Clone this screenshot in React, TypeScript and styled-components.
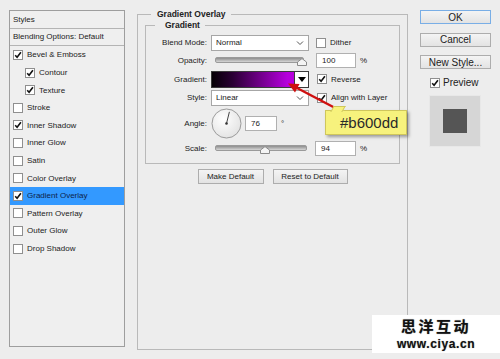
import React from "react";
import styled, { createGlobalStyle } from "styled-components";

const GlobalStyle = createGlobalStyle`
  html, body {
    margin: 0;
    padding: 0;
    background: #ededed;
  }
`;

const Page = styled.div`
  position: relative;
  width: 500px;
  height: 359px;
  box-sizing: border-box;
  padding: 10px 0 0 9px;
  display: flex;
  align-items: flex-start;
  background: #ededed;
  font-family: "Liberation Sans", Arial, sans-serif;
  color: #222;
  overflow: hidden;
`;

/* ---------- styles list on the left ---------- */

const StylesPanel = styled.div`
  width: 116px;
  height: 337px;
  box-sizing: border-box;
  border: 1px solid #9e9e9e;
  background: #efefef;
  display: flex;
  flex-direction: column;
`;

const StyleRow = styled.div<{ $indent?: number; $selected?: boolean; $divider?: boolean }>`
  height: 17.6px;
  flex: none;
  box-sizing: border-box;
  display: flex;
  align-items: center;
  gap: 4px;
  padding-left: ${(p) => p.$indent ?? 3}px;
  font-size: 8px;
  color: ${(p) => (p.$selected ? "#0d1f4a" : "#222")};
  background: ${(p) => (p.$selected ? "#3399ff" : "transparent")};
  border-bottom: ${(p) => (p.$divider ? "1px solid #b4b4b4" : "none")};
`;

const Box = styled.span`
  width: 10px;
  height: 10px;
  flex: none;
  box-sizing: border-box;
  border: 1px solid #8f8f8f;
  background: #fff;
  display: inline-flex;
  align-items: center;
  justify-content: center;
`;

const Check = ({ on }: { on?: boolean }) => (
  <Box>
    {on && (
      <svg width="8" height="8" viewBox="0 0 8 8">
        <path d="M1.2 4.2 L3.1 6.3 L6.9 1.3" fill="none" stroke="#111" strokeWidth="1.6" />
      </svg>
    )}
  </Box>
);

/* ---------- group boxes ---------- */

const Group = styled.fieldset<{ $w: number; $h?: number; $pad: string }>`
  margin: 0;
  box-sizing: border-box;
  width: ${(p) => p.$w}px;
  ${(p) => (p.$h ? `height: ${p.$h}px;` : "")}
  padding: ${(p) => p.$pad};
  border: 1px solid #b9b9b9;
  min-inline-size: 0;
`;

const Legend = styled.legend<{ $ml: number; $pl: number }>`
  margin-left: ${(p) => p.$ml}px;
  padding: 0 5px 0 ${(p) => p.$pl}px;
  font-size: 8.5px;
  font-weight: bold;
  line-height: 11px;
  color: #222;
`;

const MainPanel = styled.div`
  margin: -1px 0 0 12px;
`;

const Rows = styled.div`
  display: flex;
  flex-direction: column;
  gap: 1.8px;
`;

const FormRow = styled.div<{ $h?: number }>`
  height: ${(p) => p.$h ?? 17}px;
  display: flex;
  align-items: center;
  font-size: 8px;
`;

const Label = styled.span`
  width: 57px;
  margin-right: 4px;
  text-align: right;
  font-size: 8px;
`;

const Select = styled.div`
  width: 98px;
  height: 16px;
  box-sizing: border-box;
  border: 1px solid #a6a6a6;
  background: #fff;
  display: flex;
  align-items: center;
  justify-content: space-between;
  padding: 0 4px 0 4px;
  font-size: 8px;
`;

const Chevron = () => (
  <svg width="8" height="6" viewBox="0 0 8 6">
    <polyline points="1,1.5 4,4.5 7,1.5" fill="none" stroke="#555" strokeWidth="1" />
  </svg>
);

const CheckLabel = styled.label<{ $ml: number }>`
  margin-left: ${(p) => p.$ml}px;
  display: flex;
  align-items: center;
  gap: 4px;
  font-size: 8px;
`;

const Slider = styled.div`
  position: relative;
  width: 98px;
  height: 16px;
`;

const Track = styled.div<{ $w: number }>`
  position: absolute;
  left: 4px;
  top: 4px;
  width: ${(p) => p.$w}px;
  height: 4px;
  border-radius: 2px;
  border: 1px solid #9a9a9a;
  background: linear-gradient(#8e8e8e, #d6d6d6);
`;

const Thumb = styled.svg`
  position: absolute;
  top: 5px;
`;

const Input = styled.div<{ $w: number; $ml: number }>`
  width: ${(p) => p.$w}px;
  height: 15px;
  margin-left: ${(p) => p.$ml}px;
  box-sizing: border-box;
  border: 1px solid #b0b0b0;
  background: #fff;
  padding-left: 5px;
  font-size: 8px;
  display: flex;
  align-items: center;
`;

const Unit = styled.span`
  margin-left: 4px;
  font-size: 8px;
`;

const GradientPicker = styled.div`
  width: 98px;
  height: 17px;
  box-sizing: border-box;
  border: 1px solid #3a3a3a;
  display: flex;
`;

const Swatch = styled.div`
  flex: 1;
  background: linear-gradient(to right, #050005 0%, #2a0034 25%, #b600dd 92%, #b600dd 100%);
  border-right: 1px solid #3a3a3a;
`;

const DropButton = styled.div`
  width: 13px;
  background: #fff;
  display: flex;
  align-items: center;
  justify-content: center;
`;

const Buttons = styled.div`
  display: flex;
  justify-content: center;
  gap: 9px;
  margin-top: 5px;
`;

const Button = styled.div<{ $w: number; $h?: number; $fs?: number; $focus?: boolean }>`
  width: ${(p) => p.$w}px;
  height: ${(p) => p.$h ?? 15}px;
  box-sizing: border-box;
  border: 1px solid ${(p) => (p.$focus ? "#79aee6" : "#adadad")};
  background: linear-gradient(#f4f4f4, #e3e3e3);
  display: flex;
  align-items: center;
  justify-content: center;
  font-size: ${(p) => p.$fs ?? 8}px;
  color: #222;
`;

/* ---------- right column ---------- */

const SideColumn = styled.div`
  margin-left: 12px;
  width: 71px;
  display: flex;
  flex-direction: column;
  gap: 8.5px;
`;

const PreviewRow = styled.label`
  margin-top: -0.5px;
  padding-left: 10px;
  display: flex;
  align-items: center;
  gap: 3px;
  font-size: 10px;
`;

const PreviewBox = styled.div`
  margin: -2px 0 0 9px;
  width: 52px;
  height: 52px;
  box-sizing: border-box;
  border: 1px solid #e8e8e8;
  background: #d6d6d6;
  display: flex;
  align-items: center;
  justify-content: center;
`;

const PreviewSquare = styled.div`
  width: 24px;
  height: 24px;
  background: #555;
`;

/* ---------- overlays ---------- */

const Callout = styled.div`
  position: absolute;
  left: 325px;
  top: 110px;
  width: 82px;
  height: 25px;
  box-sizing: border-box;
  background: #f7f27d;
  border: 1px solid #cfc65c;
  box-shadow: 2px 2px 3px rgba(0, 0, 0, 0.35);
  display: flex;
  align-items: center;
  padding-left: 14px;
  font-size: 15px;
  color: #2a2a2a;

  &::before {
    content: "";
    position: absolute;
    left: 6px;
    top: -5px;
    width: 10px;
    height: 5px;
    background: #f7f27d;
    border: 1px solid #cfc65c;
    border-bottom: none;
    transform: skewX(-30deg);
  }
`;

const ArrowLayer = styled.svg`
  position: absolute;
  left: 0;
  top: 0;
  pointer-events: none;
`;

const Watermark = styled.div`
  position: absolute;
  left: 372px;
  top: 315px;
  width: 128px;
  height: 38px;
  background: #fff;
  display: flex;
  flex-direction: column;
  align-items: center;
  justify-content: center;
  gap: 4px;
`;

const MarkTitle = styled.div`
  font-family: "Noto Sans CJK SC", sans-serif;
  font-weight: bold;
  font-size: 15px;
  line-height: 16px;
  height: 16px;
  letter-spacing: 2.5px;
  color: #111;
  text-shadow: 0 0 1px #777;
`;

const MarkUrl = styled.div`
  font-family: "Liberation Sans", Arial, sans-serif;
  font-weight: bold;
  font-size: 12px;
  line-height: 12px;
  height: 12px;
  letter-spacing: 0.6px;
  color: #111;
  text-shadow: 0 0 1px #888;
`;

const styleItems = [
  { name: "Bevel & Emboss", on: true },
  { name: "Contour", on: true, sub: true },
  { name: "Texture", on: true, sub: true },
  { name: "Stroke" },
  { name: "Inner Shadow", on: true },
  { name: "Inner Glow" },
  { name: "Satin" },
  { name: "Color Overlay" },
  { name: "Gradient Overlay", on: true, selected: true },
  { name: "Pattern Overlay" },
  { name: "Outer Glow" },
  { name: "Drop Shadow" },
];

const ThumbIcon = ({ left }: { left: number }) => (
  <Thumb width="10" height="8" viewBox="0 0 10 8" style={{ left }}>
    <path d="M0.5 7.5 V4 L5 0.6 L9.5 4 V7.5 Z" fill="#f4f4f4" stroke="#8a8a8a" strokeWidth="1" />
  </Thumb>
);

const AngleDial = ({ angle }: { angle: number }) => {
  const r = (angle * Math.PI) / 180;
  const x = 15.5 + 12 * Math.cos(r);
  const y = 15.5 - 12 * Math.sin(r);
  return (
    <svg width="31" height="31" viewBox="0 0 31 31">
      <defs>
        <radialGradient id="dial" cx="40%" cy="35%" r="70%">
          <stop offset="0%" stopColor="#ffffff" />
          <stop offset="100%" stopColor="#e2e2e2" />
        </radialGradient>
      </defs>
      <circle cx="15.5" cy="15.5" r="14.5" fill="url(#dial)" stroke="#9b9b9b" />
      <line x1="15.5" y1="15.5" x2={x} y2={y} stroke="#444" strokeWidth="1" />
      <circle cx="15.5" cy="15.5" r="1.3" fill="#333" />
    </svg>
  );
};

export default function App() {
  return (
    <Page>
      <GlobalStyle />

      <StylesPanel>
        <StyleRow $divider>Styles</StyleRow>
        <StyleRow $divider>Blending Options: Default</StyleRow>
        {styleItems.map((s) => (
          <StyleRow key={s.name} $indent={s.sub ? 15 : 3} $selected={s.selected}>
            <Check on={s.on} />
            {s.name}
          </StyleRow>
        ))}
      </StylesPanel>

      <MainPanel>
        <Group $w={271} $h={341} $pad="0 7px 0 7px">
          <Legend $ml={6} $pl={6}>Gradient Overlay</Legend>
          <Group $w={255} $pad="3px 4px 6px 4px">
            <Legend $ml={5} $pl={10}>Gradient</Legend>
            <Rows>
              <FormRow>
                <Label>Blend Mode:</Label>
                <Select>
                  Normal
                  <Chevron />
                </Select>
                <CheckLabel $ml={7}>
                  <Check />
                  Dither
                </CheckLabel>
              </FormRow>
              <FormRow $h={16}>
                <Label>Opacity:</Label>
                <Slider>
                  <Track $w={87} />
                  <ThumbIcon left={86} />
                </Slider>
                <Input $w={40} $ml={7}>100</Input>
                <Unit>%</Unit>
              </FormRow>
              <FormRow>
                <Label>Gradient:</Label>
                <GradientPicker>
                  <Swatch />
                  <DropButton>
                    <svg width="8" height="5" viewBox="0 0 8 5">
                      <path d="M0 0 H8 L4 5 Z" fill="#000" />
                    </svg>
                  </DropButton>
                </GradientPicker>
                <CheckLabel $ml={8}>
                  <Check on />
                  Reverse
                </CheckLabel>
              </FormRow>
              <FormRow>
                <Label>Style:</Label>
                <Select>
                  Linear
                  <Chevron />
                </Select>
                <CheckLabel $ml={8}>
                  <Check on />
                  Align with Layer
                </CheckLabel>
              </FormRow>
              <FormRow $h={31}>
                <Label>Angle:</Label>
                <AngleDial angle={76} />
                <Input $w={32} $ml={3}>76</Input>
                <Unit>°</Unit>
              </FormRow>
              <FormRow $h={16}>
                <Label>Scale:</Label>
                <Slider>
                  <Track $w={90} />
                  <ThumbIcon left={49} />
                </Slider>
                <Input $w={41} $ml={6}>94</Input>
                <Unit>%</Unit>
              </FormRow>
            </Rows>
          </Group>
          <Buttons>
            <Button $w={66}>Make Default</Button>
            <Button $w={75}>Reset to Default</Button>
          </Buttons>
        </Group>
      </MainPanel>

      <SideColumn>
        <Button $w={71} $h={14} $fs={10} $focus>OK</Button>
        <Button $w={71} $h={14} $fs={10}>Cancel</Button>
        <Button $w={71} $h={14} $fs={10}>New Style...</Button>
        <PreviewRow>
          <Check on />
          Preview
        </PreviewRow>
        <PreviewBox>
          <PreviewSquare />
        </PreviewBox>
      </SideColumn>

      <ArrowLayer width="500" height="359" viewBox="0 0 500 359">
        <line x1="339" y1="110" x2="297" y2="88" stroke="#cf1010" strokeWidth="2.4" />
        <path d="M288 83.5 L299.5 84 L295 92.5 Z" fill="#cf1010" />
      </ArrowLayer>

      <Callout>#b600dd</Callout>

      <Watermark>
        <MarkTitle>思洋互动</MarkTitle>
        <MarkUrl>www.ciya.cn</MarkUrl>
      </Watermark>
    </Page>
  );
}
